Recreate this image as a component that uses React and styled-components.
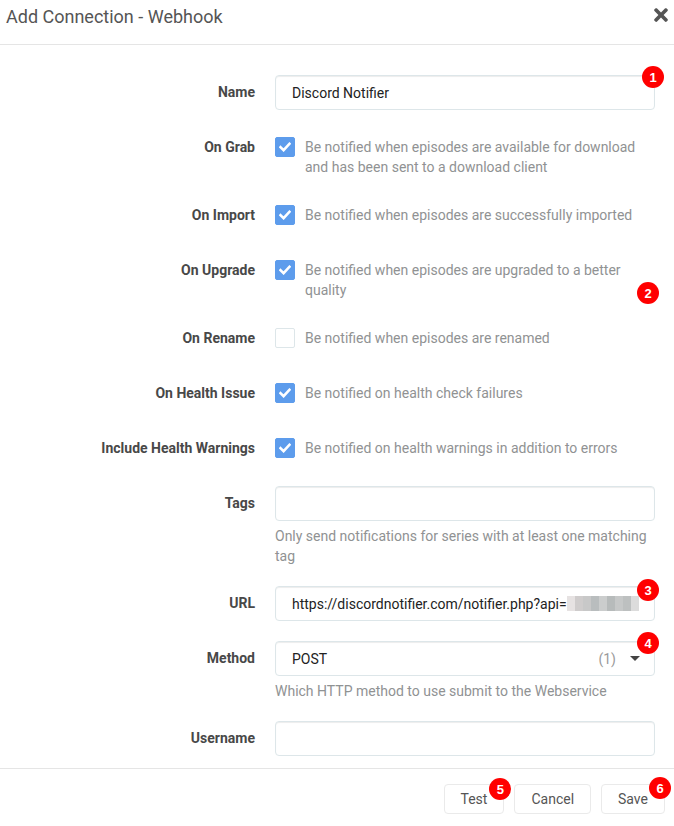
import React from 'react';
import styled, { createGlobalStyle } from 'styled-components';
import { FaTimes } from 'react-icons/fa';

const GlobalStyle = createGlobalStyle`
  html, body {
    margin: 0;
    padding: 0;
    background: #fff;
    overflow: hidden;
  }
  body {
    font-family: Roboto, "Open Sans", "Liberation Sans", sans-serif;
    font-size: 14px;
    color: #515253;
  }
`;

const Modal = styled.div`
  width: 674px;
  height: 826px;
  display: flex;
  flex-direction: column;
  background: #fff;
`;

const Header = styled.div`
  display: flex;
  justify-content: space-between;
  align-items: flex-start;
  height: 45px;
  box-sizing: border-box;
  padding: 6px 3px 0 6px;
  border-bottom: 1px solid #e5e5e5;
  flex-shrink: 0;
`;

const Title = styled.div`
  font-size: 18px;
  line-height: 21px;
  color: #555;
`;

const Close = styled.div`
  color: #555;
  display: flex;
  margin-top: -1px;
`;

const Body = styled.div`
  height: 723px;
  box-sizing: border-box;
  padding: 30px 19px 0 6px;
  overflow: hidden;
  flex-shrink: 0;
`;

const Group = styled.div`
  display: flex;
  margin-bottom: 20px;
`;

const Label = styled.div`
  width: 249px;
  margin-right: 20px;
  flex-shrink: 0;
  text-align: right;
  font-weight: bold;
  line-height: 35px;
  color: #484848;
`;

const Content = styled.div`
  position: relative;
  flex: 1;
  min-width: 0;
`;

const Field = styled.div`
  position: relative;
  height: 35px;
  box-sizing: border-box;
  padding: 0 15px 0 16px;
  display: flex;
  align-items: center;
  border: 1px solid #dde6e9;
  border-radius: 4px;
  box-shadow: inset 0 1px 1px rgba(0, 0, 0, 0.075);
  color: #222;
  white-space: nowrap;
`;

const Masked = styled.span`
  display: inline-block;
  width: 73px;
  height: 15px;
  background: linear-gradient(
    90deg,
    #e6e2e2 0 8px,
    #cfcccc 8px 16px,
    #c8c8c8 16px 24px,
    #b9bdbe 24px 32px,
    #cbcdcd 32px 40px,
    #b7bbbb 40px 48px,
    #c6c8c8 48px 56px,
    #bdc0c0 56px 64px,
    #dcdcdc 64px 73px
  );
`;

const Count = styled.span`
  margin-left: auto;
  color: #9a9a9a;
`;

const Caret = styled.span`
  margin-left: 14px;
  margin-right: -1px;
  width: 0;
  height: 0;
  border-left: 5px solid transparent;
  border-right: 5px solid transparent;
  border-top: 5px solid #444;
`;

const Help = styled.div`
  margin-top: 5px;
  line-height: 20px;
  color: #909293;
`;

const CheckRow = styled.div`
  display: flex;
  align-items: flex-start;
  min-height: 35px;
  box-sizing: border-box;
  padding: 7px 0 1px;
`;

const Box = styled.span`
  width: 20px;
  height: 20px;
  margin-right: 10px;
  flex-shrink: 0;
  box-sizing: border-box;
  border-radius: 2px;
  display: flex;
  align-items: center;
  justify-content: center;
  background: ${(p) => (p.$checked ? '#5d9cec' : '#fff')};
  border: 1px solid ${(p) => (p.$checked ? '#5d9cec' : '#dde6e9')};
`;

const CheckText = styled.div`
  line-height: 20px;
  color: #909293;
`;

const Footer = styled.div`
  display: flex;
  justify-content: flex-end;
  gap: 10px;
  padding: 15px 9px 0 0;
  border-top: 1px solid #e5e5e5;
`;

const Button = styled.div`
  position: relative;
  height: 30px;
  box-sizing: border-box;
  padding: 0 16px;
  display: flex;
  align-items: center;
  border: 1px solid #eaeaea;
  border-radius: 4px;
  color: #555;
  background: #fff;
`;

const Badge = styled.span`
  position: absolute;
  right: ${(p) => p.$right}px;
  top: ${(p) => p.$top}px;
  width: 22px;
  height: 22px;
  border-radius: 50%;
  background: #f00;
  color: #fff;
  font-family: "Liberation Sans", Arial, sans-serif;
  font-weight: bold;
  font-size: 13px;
  display: flex;
  align-items: center;
  justify-content: center;
`;

const Check = () => (
  <svg width="12" height="10" viewBox="0 0 12 10">
    <path d="M1.5 5.2 L4.6 8.2 L10.5 1.8" fill="none" stroke="#fff" strokeWidth="2.6" strokeLinecap="square" />
  </svg>
);

const CheckGroup = ({ label, checked, text, badge }) => (
  <Group>
    <Label>{label}</Label>
    <Content>
      <CheckRow>
        <Box $checked={checked}>{checked && <Check />}</Box>
        <CheckText>{text}</CheckText>
      </CheckRow>
      {badge}
    </Content>
  </Group>
);

const App = () => {
  return (
    <Modal>
      <GlobalStyle />
      <Header>
        <Title>Add Connection - Webhook</Title>
        <Close><FaTimes size={20} /></Close>
      </Header>
      <Body>
        <Group>
          <Label>Name</Label>
          <Content>
            <Field>
              Discord Notifier
              <Badge $right={-10} $top={-10}>1</Badge>
            </Field>
          </Content>
        </Group>

        <CheckGroup label="On Grab" checked text="Be notified when episodes are available for download and has been sent to a download client" />
        <CheckGroup label="On Import" checked text="Be notified when episodes are successfully imported" />
        <CheckGroup
          label="On Upgrade"
          checked
          text="Be notified when episodes are upgraded to a better quality"
          badge={<Badge $right={-4} $top={29}>2</Badge>}
        />
        <CheckGroup label="On Rename" text="Be notified when episodes are renamed" />
        <CheckGroup label="On Health Issue" checked text="Be notified on health check failures" />
        <CheckGroup label="Include Health Warnings" checked text="Be notified on health warnings in addition to errors" />

        <Group>
          <Label>Tags</Label>
          <Content>
            <Field />
            <Help>Only send notifications for series with at least one matching tag</Help>
          </Content>
        </Group>

        <Group>
          <Label>URL</Label>
          <Content>
            <Field>
              https://discordnotifier.com/notifier.php?api=<Masked />
              <Badge $right={-5} $top={-8}>3</Badge>
            </Field>
          </Content>
        </Group>

        <Group>
          <Label>Method</Label>
          <Content>
            <Field>
              POST
              <Count>(1)</Count>
              <Caret />
              <Badge $right={-5} $top={-10}>4</Badge>
            </Field>
            <Help>Which HTTP method to use submit to the Webservice</Help>
          </Content>
        </Group>

        <Group>
          <Label>Username</Label>
          <Content>
            <Field />
          </Content>
        </Group>
      </Body>
      <Footer>
        <Button>
          Test
          <Badge $right={-8} $top={-7}>5</Badge>
        </Button>
        <Button>Cancel</Button>
        <Button>
          Save
          <Badge $right={-7} $top={-8}>6</Badge>
        </Button>
      </Footer>
    </Modal>
  );
};

export default App;
